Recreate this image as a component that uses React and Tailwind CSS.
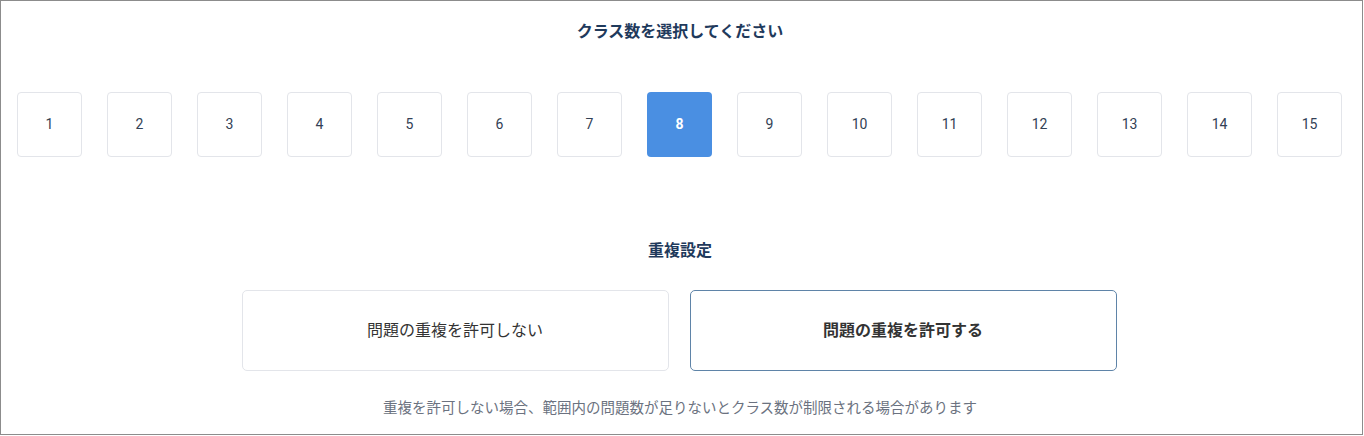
export default function App() {
  const counts = Array.from({ length: 15 }, (_, i) => i + 1);
  const selected = 8;
  return (
    <div
      className="w-[1363px] h-[435px] border border-[#8c8c8c] bg-white flex flex-col items-center pr-[3px]"
      style={{ fontFamily: 'Roboto, "Noto Sans CJK JP", sans-serif' }}
    >
      <h2 className="mt-[20px] h-[22px] leading-[22px] text-[16px] font-bold text-[#1f3a5c]">
        クラス数を選択してください
      </h2>

      <div className="mt-[49px] flex gap-[25px] pl-[16px] self-stretch">
        {counts.map((n) => (
          <button
            key={n}
            className={
              n === selected
                ? "w-[65px] h-[65px] rounded-[4px] bg-[#4a8fe2] text-white text-[14px] font-bold"
                : "w-[65px] h-[65px] rounded-[4px] border border-[#e3e5ea] bg-white text-[#334155] text-[14px]"
            }
          >
            {n}
          </button>
        ))}
      </div>

      <h3 className="mt-[83px] h-[22px] leading-[22px] text-[16px] font-bold text-[#1f3a5c]">
        重複設定
      </h3>

      <div className="mt-[28px] flex gap-[21px] mr-[2px]">
        <button className="w-[427px] h-[81px] rounded-[5px] border border-[#e3e5ea] bg-white text-[16px] font-normal text-[#333]">
          問題の重複を許可しない
        </button>
        <button className="w-[427px] h-[81px] rounded-[5px] border border-[#5f84a8] bg-white text-[16px] font-bold text-[#333]">
          問題の重複を許可する
        </button>
      </div>

      <p className="mt-[28px] text-[14.5px] leading-[20px] text-[#6b7280]">
        重複を許可しない場合、範囲内の問題数が足りないとクラス数が制限される場合があります
      </p>
    </div>
  );
}
